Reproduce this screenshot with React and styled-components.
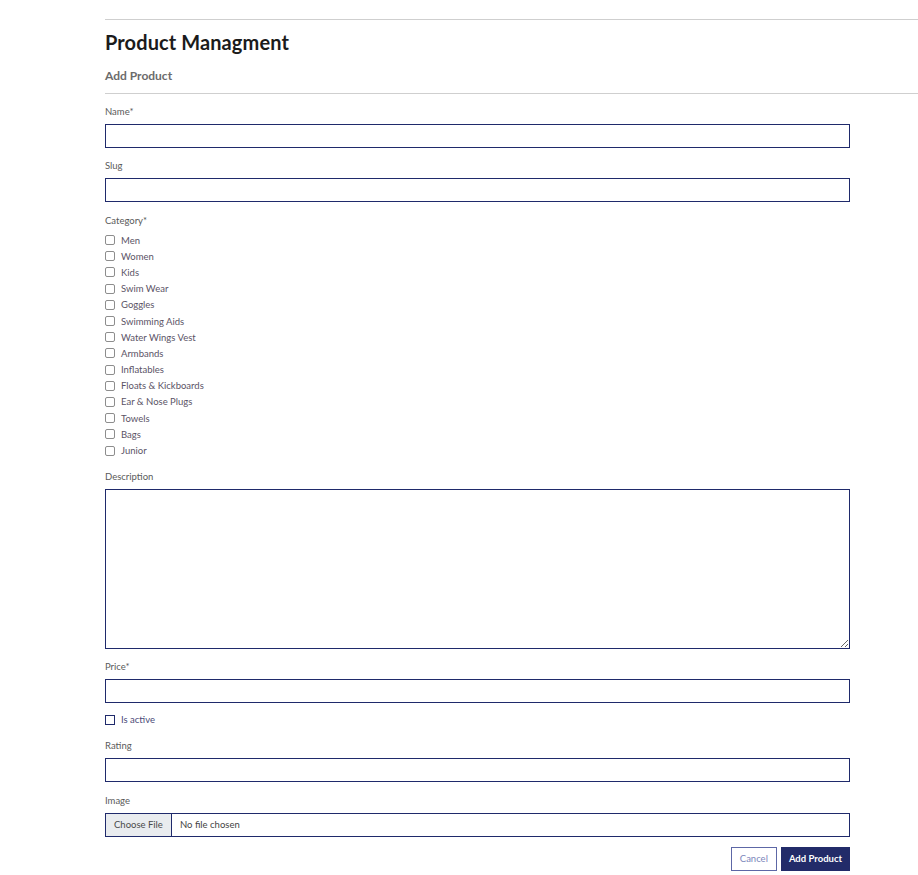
import React from "react";
import styled, { createGlobalStyle } from "styled-components";

const Global = createGlobalStyle`
  html, body { margin: 0; padding: 0; background: #fff; }
  body { font-family: Lato, "Noto Sans", sans-serif; }
  * { box-sizing: border-box; }
`;

const NAVY = "#1f2a6b";

const Page = styled.div`
  padding: 19px 0 0 105px;
`;

const Rule = styled.hr`
  border: 0;
  border-top: 1px solid #cfcfcf;
  margin: 0;
`;

const Title = styled.h1`
  margin: 0;
  padding: 10px 0 0;
  height: 46px;
  font-size: 20px;
  font-weight: 700;
  color: #1b1b1b;
  line-height: 24px;
  letter-spacing: 0.1px;
`;

const Subtitle = styled.h2`
  margin: 0;
  height: 27px;
  font-size: 12px;
  font-weight: 700;
  color: #6b6b6b;
  line-height: 20px;
`;

const Form = styled.form`
  width: 745px;
  padding-top: 11px;
  display: flex;
  flex-direction: column;
`;

const Field = styled.div`
  display: flex;
  flex-direction: column;
  margin-bottom: ${(p) => p.$mb ?? 11}px;
`;

const Label = styled.label`
  font-size: 9.5px;
  line-height: 12px;
  height: 12px;
  padding-top: 1px;
  color: #5a5a5a;
  margin-bottom: ${(p) => p.$mb ?? 7}px;
`;

const Input = styled.input`
  height: 24px;
  width: 100%;
  border: 1px solid ${NAVY};
  border-radius: 0;
  outline: none;
  padding: 0 8px;
  font-family: inherit;
`;

const TextArea = styled.textarea`
  height: 160px;
  width: 100%;
  border: 1px solid ${NAVY};
  border-radius: 0;
  outline: none;
  padding: 6px 8px;
  font-family: inherit;
  display: block;
  margin: 0;
`;

const CheckList = styled.div`
  display: flex;
  flex-direction: column;
`;

const CheckRow = styled.label`
  display: flex;
  align-items: center;
  height: 16.2px;
  gap: 6px;
  font-size: 9.5px;
  color: #5b5366;
`;

const Box = styled.span`
  width: 10px;
  height: 10px;
  border-style: solid;
  border-color: ${(p) => (p.$navy ? NAVY : "#8d8d8d")};
  border-width: ${(p) => (p.$navy ? "1.5px" : "1px")};
  border-radius: ${(p) => (p.$navy ? "0" : "2px")};
  flex: none;
  background: #fff;
`;

const ActiveRow = styled(CheckRow)`
  height: 12px;
  margin-bottom: 13px;
  color: #4b4a78;
`;

const FileBox = styled.div`
  display: flex;
  height: 24px;
  border: 1px solid ${NAVY};
  font-size: 9.5px;
  color: #444;
`;

const FileButton = styled.span`
  display: flex;
  align-items: center;
  padding: 0 8px;
  width: 66px;
  background: #e9ecef;
  border-right: 1px solid ${NAVY};
  color: #4a4a4a;
`;

const FileText = styled.span`
  display: flex;
  align-items: center;
  padding-left: 8px;
`;

const Actions = styled.div`
  display: flex;
  justify-content: flex-end;
  gap: 4px;
`;

const Button = styled.button`
  height: 24px;
  padding: 0 ${(p) => (p.$primary ? 7 : 8)}px;
  font-family: inherit;
  font-size: 9.5px;
  border-radius: 0;
  cursor: pointer;
  border: 1px solid ${(p) => (p.$primary ? "#222b69" : "#5d67a6")};
  background: ${(p) => (p.$primary ? "#222b69" : "#fff")};
  color: ${(p) => (p.$primary ? "#fff" : "#7c86bb")};
  font-weight: ${(p) => (p.$primary ? 700 : 400)};
`;

const categories = [
  "Men",
  "Women",
  "Kids",
  "Swim Wear",
  "Goggles",
  "Swimming Aids",
  "Water Wings Vest",
  "Armbands",
  "Inflatables",
  "Floats & Kickboards",
  "Ear & Nose Plugs",
  "Towels",
  "Bags",
  "Junior",
];

export default function App() {
  return (
    <>
      <Global />
      <Page>
        <Rule />
        <Title>Product Managment</Title>
        <Subtitle>Add Product</Subtitle>
        <Rule />
        <Form onSubmit={(e) => e.preventDefault()}>
          <Field>
            <Label>Name*</Label>
            <Input />
          </Field>
          <Field $mb={12}>
            <Label>Slug</Label>
            <Input />
          </Field>
          <Field>
            <Label $mb={6}>Category*</Label>
            <CheckList>
              {categories.map((c) => (
                <CheckRow key={c}>
                  <Box />
                  {c}
                </CheckRow>
              ))}
            </CheckList>
          </Field>
          <Field>
            <Label>Description</Label>
            <TextArea />
          </Field>
          <Field>
            <Label>Price*</Label>
            <Input />
          </Field>
          <ActiveRow>
            <Box $navy />
            Is active
          </ActiveRow>
          <Field $mb={12}>
            <Label>Rating</Label>
            <Input />
          </Field>
          <Field $mb={10}>
            <Label>Image</Label>
            <FileBox>
              <FileButton>Choose File</FileButton>
              <FileText>No file chosen</FileText>
            </FileBox>
          </Field>
          <Actions>
            <Button type="button">Cancel</Button>
            <Button $primary type="submit">Add Product</Button>
          </Actions>
        </Form>
      </Page>
    </>
  );
}
